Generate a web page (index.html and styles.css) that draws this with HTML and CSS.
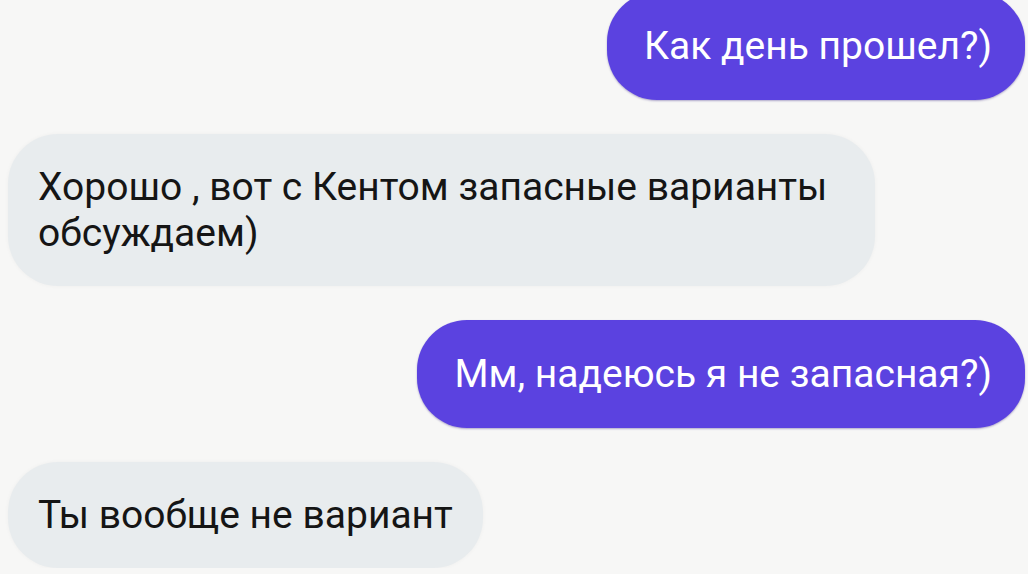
FILE: index.html
```html
<!DOCTYPE html>
<html lang="ru">

<head>
    <meta charset="UTF-8">
    <meta name="viewport" content="width=device-width, initial-scale=1.0">
    <title>Чат</title>
    <link rel="stylesheet" href="styles.css">
</head>

<body>
    <main class="chat">
        <div class="message outgoing first">Как день прошел?)</div>
        <div class="message incoming">Хорошо , вот с Кентом запасные варианты обсуждаем)</div>
        <div class="message outgoing">Мм, надеюсь я не запасная?)</div>
        <div class="message incoming">Ты вообще не вариант</div>
    </main>
</body>

</html>
```

FILE: styles.css
```css
body {
    font-family: 'Roboto', 'Liberation Sans', sans-serif;
    margin: 0;
    padding: 0;
    background-color: #f7f7f6;
    overflow: hidden;
}

.chat {
    display: flex;
    flex-direction: column;
    gap: 34px;
    padding: 0 3px 0 8px;
}

.message {
    font-size: 39px;
    line-height: 46px;
    padding: 30px 30px;
    border-radius: 50px;
    max-width: 807px;
}

.message.first {
    margin-top: -8px;
}

.outgoing {
    align-self: flex-end;
    background-color: #5b42e0;
    color: #fff;
    padding: 31px 33px 31px 37px;
    box-shadow: 0 1px 2px rgba(40, 20, 120, 0.35);
}

.incoming {
    align-self: flex-start;
    background-color: #e8ecee;
    color: #151515;
    box-shadow: 0 0 4px rgba(0, 0, 0, 0.04);
}
```
